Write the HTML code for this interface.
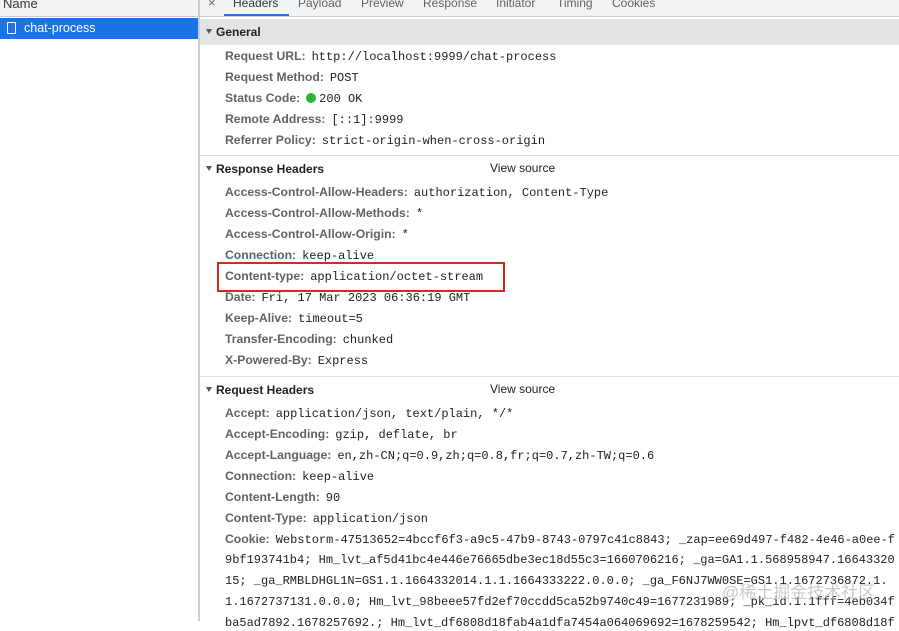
<!DOCTYPE html>
<html><head><meta charset="utf-8"><style>
*{margin:0;padding:0;box-sizing:border-box}
body{width:899px;height:621px;overflow:hidden;background:#fff;font-family:"Liberation Sans",Arial,sans-serif;font-size:12px;color:#303942;position:relative}
.a{position:absolute;white-space:nowrap}
.l{font-weight:bold;color:#5f6368;font-size:12.2px}
.m{font-family:"Liberation Mono",monospace;font-size:12px;color:#222;margin-left:6px}
.row{position:absolute;left:225px;white-space:nowrap;line-height:16px}
.sec{position:absolute;left:206px;font-weight:bold;color:#202124;line-height:16px}
.tri{display:inline-block;width:0;height:0;border-left:3.5px solid transparent;border-right:3.5px solid transparent;border-top:5px solid #555;margin-right:4px;vertical-align:2px}
.vs{position:absolute;left:490px;color:#202124}
.hr{position:absolute;left:200px;right:0;height:1px;background:#e0e0e0}
</style></head><body>
<div class="a" style="left:0;top:0;width:199px;height:17px;background:#f1f3f4;border-bottom:1px solid #cbcdd1"></div>
<div class="a" style="left:3px;top:-4px;font-size:13px;color:#303942">Name</div>
<div class="a" style="left:0;top:18px;width:198px;height:21px;background:#1a73e8"></div>
<div class="a" style="left:7px;top:22px;width:9px;height:12px;border:1px solid #fff;border-radius:1px"></div>
<div class="a" style="left:24px;top:21px;color:#fff;font-size:12.5px">chat-process</div>
<div class="a" style="left:198px;top:0;width:2px;height:621px;background:#cbcdd1"></div>
<div class="a" style="left:200px;top:0;width:699px;height:17px;background:#f1f3f4;border-bottom:1px solid #cbcdd1"></div>
<div class="a" style="left:208px;top:-5px;color:#666;font-size:13px">×</div>
<div class="a" style="left:233px;top:-4px;font-size:12px;color:#303942">Headers</div>
<div class="a" style="left:224px;top:14px;width:65px;height:2px;background:#1a73e8"></div>
<div class="a" style="left:298px;top:-4px;color:#5f6368">Payload</div>
<div class="a" style="left:361px;top:-4px;color:#5f6368">Preview</div>
<div class="a" style="left:423px;top:-4px;color:#5f6368">Response</div>
<div class="a" style="left:496px;top:-4px;color:#5f6368">Initiator</div>
<div class="a" style="left:557px;top:-4px;color:#5f6368">Timing</div>
<div class="a" style="left:612px;top:-4px;color:#5f6368">Cookies</div>
<div class="a" style="left:200px;top:19px;width:699px;height:26px;background:#e3e3e3"></div>
<div class="sec" style="top:24px"><span class="tri"></span>General</div>
<div class="row" style="top:48px"><span class="l">Request URL:</span><span class="m">http://localhost:9999/chat-process</span></div>
<div class="row" style="top:69px"><span class="l">Request Method:</span><span class="m">POST</span></div>
<div class="row" style="top:90px"><span class="l">Status Code:</span><span style="display:inline-block;width:10px;height:10px;border-radius:50%;background:#2db52d;margin-left:6px;vertical-align:-1px"></span><span class="m" style="margin-left:3px">200 OK</span></div>
<div class="row" style="top:111px"><span class="l">Remote Address:</span><span class="m">[::1]:9999</span></div>
<div class="row" style="top:132px"><span class="l">Referrer Policy:</span><span class="m">strict-origin-when-cross-origin</span></div>
<div class="hr" style="top:155px"></div>
<div class="sec" style="top:161px"><span class="tri"></span>Response Headers</div>
<div class="vs" style="top:161px">View source</div>
<div class="row" style="top:184px"><span class="l">Access-Control-Allow-Headers:</span><span class="m">authorization, Content-Type</span></div>
<div class="row" style="top:205px"><span class="l">Access-Control-Allow-Methods:</span><span class="m">*</span></div>
<div class="row" style="top:226px"><span class="l">Access-Control-Allow-Origin:</span><span class="m">*</span></div>
<div class="row" style="top:247px"><span class="l">Connection:</span><span class="m">keep-alive</span></div>
<div class="row" style="top:268px"><span class="l">Content-type:</span><span class="m">application/octet-stream</span></div>
<div class="a" style="left:217px;top:262px;width:288px;height:30px;border:2px solid #d42a20"></div>
<div class="row" style="top:289px"><span class="l">Date:</span><span class="m">Fri, 17 Mar 2023 06:36:19 GMT</span></div>
<div class="row" style="top:310px"><span class="l">Keep-Alive:</span><span class="m">timeout=5</span></div>
<div class="row" style="top:331px"><span class="l">Transfer-Encoding:</span><span class="m">chunked</span></div>
<div class="row" style="top:352px"><span class="l">X-Powered-By:</span><span class="m">Express</span></div>
<div class="hr" style="top:376px"></div>
<div class="sec" style="top:382px"><span class="tri"></span>Request Headers</div>
<div class="vs" style="top:382px">View source</div>
<div class="row" style="top:405px"><span class="l">Accept:</span><span class="m">application/json, text/plain, */*</span></div>
<div class="row" style="top:426px"><span class="l">Accept-Encoding:</span><span class="m">gzip, deflate, br</span></div>
<div class="row" style="top:447px"><span class="l">Accept-Language:</span><span class="m">en,zh-CN;q=0.9,zh;q=0.8,fr;q=0.7,zh-TW;q=0.6</span></div>
<div class="row" style="top:468px"><span class="l">Connection:</span><span class="m">keep-alive</span></div>
<div class="row" style="top:489px"><span class="l">Content-Length:</span><span class="m">90</span></div>
<div class="row" style="top:510px"><span class="l">Content-Type:</span><span class="m">application/json</span></div>
<div class="row" style="top:531px"><span class="l">Cookie:</span><span class="m">Webstorm-47513652=4bccf6f3-a9c5-47b9-8743-0797c41c8843; _zap=ee69d497-f482-4e46-a0ee-f</span></div>
<div class="row m" style="top:552px;margin:0">9bf193741b4; Hm_lvt_af5d41bc4e446e76665dbe3ec18d55c3=1660706216; _ga=GA1.1.568958947.16643320</div>
<div class="row m" style="top:573px;margin:0">15; _ga_RMBLDHGL1N=GS1.1.1664332014.1.1.1664333222.0.0.0; _ga_F6NJ7WW0SE=GS1.1.1672736872.1.</div>
<div class="row m" style="top:594px;margin:0">1.1672737131.0.0.0; Hm_lvt_98beee57fd2ef70ccdd5ca52b9740c49=1677231989; _pk_id.1.1fff=4eb034f</div>
<div class="row m" style="top:615px;margin:0">ba5ad7892.1678257692.; Hm_lvt_df6808d18fab4a1dfa7454a064069692=1678259542; Hm_lpvt_df6808d18f</div>
<div class="a" style="left:722px;top:578px;font-size:17px;color:rgba(180,180,180,0.7);font-family:'Liberation Sans','Noto Sans CJK SC',sans-serif">@稀土掘金技术社区</div>
</body></html>
